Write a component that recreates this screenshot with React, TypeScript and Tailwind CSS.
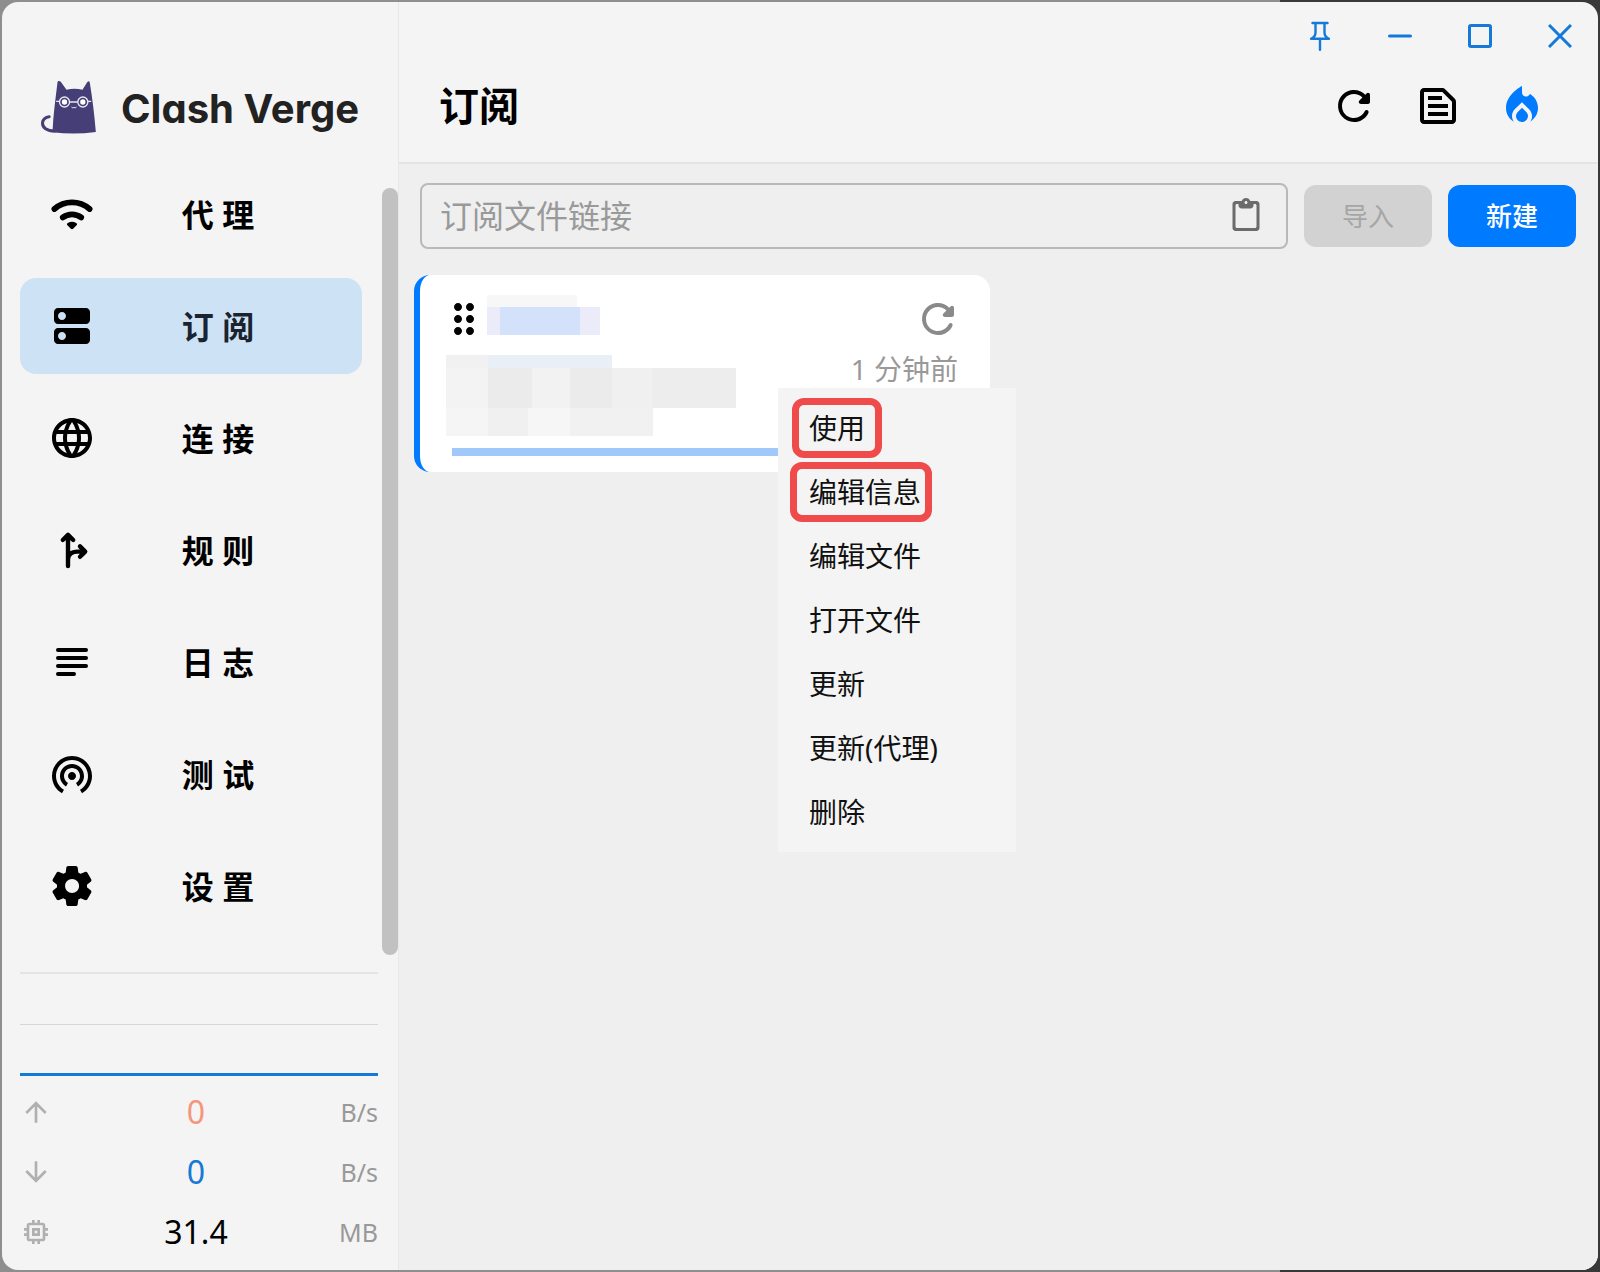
import React, { ReactNode } from "react";
import {
  MdArrowDownward,
  MdArrowUpward,
  MdDragIndicator,
  MdLanguage,
  MdLocalFireDepartment,
  MdMemory,
  MdOutlineTextSnippet,
  MdWifiTethering,
} from "react-icons/md";

interface IconProps {
  className?: string;
}

const WifiIcon = ({ className }: IconProps) => (
  <svg viewBox="0 0 24 24" className={className} fill="none" stroke="currentColor" strokeWidth="2.9" strokeLinecap="round">
    <path d="M3.2 9.5a13.4 13.4 0 0 1 17.6 0" />
    <path d="M7.4 13.7a7.6 7.6 0 0 1 9.2 0" />
    <path d="M9.6 17.5q-.5-.6.3-1a4.4 4.4 0 0 1 4.2 0q.8.4.3 1l-1.7 1.8c-.4.4-1 .4-1.4 0z" fill="currentColor" stroke="none" />
  </svg>
);

const DnsIcon = ({ className }: IconProps) => (
  <svg viewBox="0 0 24 24" className={className} fill="currentColor">
    <path d="M19 13H5c-1.1 0-2 .9-2 2v4c0 1.1.9 2 2 2h14c1.1 0 2-.9 2-2v-4c0-1.1-.9-2-2-2zM7 19c-1.1 0-2-.9-2-2s.9-2 2-2 2 .9 2 2-.9 2-2 2zM19 3H5c-1.1 0-2 .9-2 2v4c0 1.1.9 2 2 2h14c1.1 0 2-.9 2-2V5c0-1.1-.9-2-2-2zM7 9c-1.1 0-2-.9-2-2s.9-2 2-2 2 .9 2 2-.9 2-2 2z" />
  </svg>
);

const ForkIcon = ({ className }: IconProps) => (
  <svg viewBox="0 0 24 24" className={className} fill="none" stroke="currentColor" strokeWidth="2.2" strokeLinecap="round" strokeLinejoin="round">
    <path d="M10 20V5M7.4 7 10 4.4 12.6 7M10 16.8c0-2.8 2-4 5-4h3.4M16 10.2l2.6 2.6-2.6 2.6" />
  </svg>
);

const SubjectIcon = ({ className }: IconProps) => (
  <svg viewBox="0 0 24 24" className={className} fill="none" stroke="currentColor" strokeWidth="2" strokeLinecap="round">
    <path d="M5 6h14M5 10h14M5 14h14M5 18h8" />
  </svg>
);

const SettingsIcon = ({ className }: IconProps) => (
  <svg viewBox="0 0 24 24" className={className} fill="currentColor">
    <path d="M19.5 12c0-.23-.01-.45-.03-.68l1.86-1.41c.4-.3.51-.86.26-1.3l-1.87-3.23c-.25-.44-.79-.62-1.25-.42l-2.15.91c-.37-.26-.76-.49-1.17-.68l-.29-2.31c-.06-.5-.49-.88-.99-.88h-3.73c-.51 0-.94.38-1 .88l-.29 2.31c-.41.19-.8.42-1.17.68l-2.15-.91c-.46-.2-1-.02-1.25.42L2.41 8.62c-.25.44-.14.99.26 1.3l1.86 1.41c-.02.22-.03.44-.03.67s.01.45.03.68l-1.86 1.41c-.4.3-.51.86-.26 1.3l1.87 3.23c.25.44.79.62 1.25.42l2.15-.91c.37.26.76.49 1.17.68l.29 2.31c.06.5.49.88.99.88h3.73c.5 0 .93-.38.99-.88l.29-2.31c.41-.19.8-.42 1.17-.68l2.15.91c.46.2 1 .02 1.25-.42l1.87-3.23c.25-.44.14-.99-.26-1.3l-1.86-1.41c.03-.23.04-.45.04-.68zm-7.46 3.5c-1.93 0-3.5-1.57-3.5-3.5s1.57-3.5 3.5-3.5 3.5 1.57 3.5 3.5-1.57 3.5-3.5 3.5z" />
  </svg>
);

const RefreshIcon = ({ className }: IconProps) => (
  <svg viewBox="0 0 24 24" className={className} fill="currentColor">
    <path d="M17.65 6.35c-1.63-1.63-3.94-2.57-6.48-2.31-3.67.37-6.69 3.35-7.1 7.02C3.52 15.91 7.27 20 12 20c3.19 0 5.93-1.87 7.21-4.56.32-.67-.16-1.44-.9-1.44-.37 0-.72.2-.88.53-1.13 2.43-3.84 3.97-6.8 3.31-2.22-.49-4.01-2.3-4.48-4.52C5.31 9.44 8.26 6 12 6c1.66 0 3.14.69 4.22 1.78l-1.51 1.51c-.63.63-.19 1.71.7 1.71H19c.55 0 1-.45 1-1V6.41c0-.89-1.08-1.34-1.71-.71l-.64.65z" />
  </svg>
);

const PasteIcon = ({ className }: IconProps) => (
  <svg viewBox="0 0 24 24" className={className} fill="currentColor">
    <path d="M19 2h-4.18C14.4.84 13.3 0 12 0S9.6.84 9.18 2H5c-1.1 0-2 .9-2 2v16c0 1.1.9 2 2 2h14c1.1 0 2-.9 2-2V4c0-1.1-.9-2-2-2zm-7 0c.55 0 1 .45 1 1s-.45 1-1 1-1-.45-1-1 .45-1 1-1zm6 18H6c-.55 0-1-.45-1-1V5c0-.55.45-1 1-1h1v1c0 1.1.9 2 2 2h6c1.1 0 2-.9 2-2V4h1c.55 0 1 .45 1 1v14c0 .55-.45 1-1 1z" />
  </svg>
);

const PinIcon = ({ className }: IconProps) => (
  <svg viewBox="0 0 32 32" className={className} fill="none" stroke="currentColor" strokeWidth="2.4" strokeLinecap="round" strokeLinejoin="round">
    <path d="M8.5 3h15M11.5 3v9.5c0 2.5-1.5 5-4.5 6.3h18c-3-1.3-4.5-3.8-4.5-6.3V3M16 18.8v11" />
  </svg>
);

const CatLogo = ({ className }: IconProps) => (
  <svg viewBox="120 240 170 165" className={className}>
    <path d="M177 243q4 0 7 5l15 21q23-5 48 0l14-22q6-7 8 1c8 50 14 98 18 148q-64 9-130 1c2-50 9-100 15-150q1-4 3-4z" fill="#463f77" />
    <path d="M164 393c-24 0-38-10-37-25 2-12 10-17 20-18" fill="none" stroke="#463f77" strokeWidth="9" strokeLinecap="round" />
    <g fill="none" stroke="#e9e8f2" strokeWidth="4">
      <circle cx="193" cy="306" r="15" />
      <circle cx="248" cy="306" r="15" />
      <path d="M208 306h25M168 304h10M263 304h10" />
      <path d="M214 321q4 5 7 1 4 4 8-1" strokeWidth="3" />
    </g>
    <circle cx="193" cy="306" r="8" fill="#fff" />
    <circle cx="248" cy="306" r="8" fill="#fff" />
  </svg>
);

const navItems: { label: string; icon: ReactNode; active?: boolean }[] = [
  { label: "代 理", icon: <WifiIcon className="size-12" /> },
  { label: "订 阅", icon: <DnsIcon className="size-12" />, active: true },
  { label: "连 接", icon: <MdLanguage className="size-12" /> },
  { label: "规 则", icon: <ForkIcon className="size-12" /> },
  { label: "日 志", icon: <SubjectIcon className="size-12" /> },
  { label: "测 试", icon: <MdWifiTethering className="size-12" /> },
  { label: "设 置", icon: <SettingsIcon className="size-12" /> },
];

const stats = [
  { icon: <MdArrowUpward className="size-8" />, value: "0", unit: "B/s", color: "text-[#f5967c]" },
  { icon: <MdArrowDownward className="size-8" />, value: "0", unit: "B/s", color: "text-[#1479d8]" },
  { icon: <MdMemory className="size-8" />, value: "31.4", unit: "MB", color: "text-black" },
];

const menuItems = [
  { label: "使用", frame: "ml-[2px] rounded-xl border-[7px] border-[#ee4b4a] px-[10px] py-[3px]" },
  { label: "编辑信息", frame: "rounded-xl border-[7px] border-[#ee4b4a] pt-[3px] pr-1 pb-[3px] pl-3" },
  { label: "编辑文件" },
  { label: "打开文件" },
  { label: "更新" },
  { label: "更新(代理)" },
  { label: "删除" },
];

function Sidebar() {
  return (
    <aside className="flex w-[397px] flex-none flex-col border-r border-[#e8e8e8]">
      <div className="flex h-[164px] flex-none items-center pt-[46px] pl-[38px]">
        <CatLogo className="h-[55px] w-[57px]" />
        <span className="ml-6 pt-1 font-['Inter','Noto_Sans',sans-serif] text-[40px] leading-10 font-bold whitespace-nowrap text-[#222] [font-feature-settings:'cv11']">
          Clash Verge
        </span>
      </div>

      <div className="flex">
        <nav className="flex flex-1 flex-col gap-4 pr-5 pl-[18px]">
          {navItems.map((item) => (
            <a
              key={item.label}
              href="#"
              className={
                item.active
                  ? "flex h-24 items-center rounded-2xl bg-[#cde2f5] pl-7 text-[#1a2430]"
                  : "flex h-24 items-center rounded-2xl pl-7 text-black"
              }
            >
              <span className="text-black">{item.icon}</span>
              <span className="flex-1 pt-[2px] pr-[22px] text-center text-[32px] leading-10 font-bold">{item.label}</span>
            </a>
          ))}
        </nav>
        <div className="mt-[22px] h-[767px] w-4 rounded-full bg-[#c1c1c1]" />
      </div>

      <div className="mt-auto mr-5 ml-[18px] border-t-2 border-[#e4e4e4] pb-2">
        <div className="mt-[50px] h-px bg-[#d6d6d6]" />
        <div className="mt-12 h-[3px] bg-[#1479d8]" />
        <div className="mt-[6px] flex flex-col">
          {stats.map((stat, i) => (
            <div key={i} className="flex h-[60px] items-center">
              <span className="w-[66px] text-[#b0b0b0]">{stat.icon}</span>
              <span className={`flex-1 text-center text-[32px] leading-10 ${stat.color}`}>{stat.value}</span>
              <span className="w-[72px] text-right text-[25px] leading-8 text-[#999]">{stat.unit}</span>
            </div>
          ))}
        </div>
      </div>
    </aside>
  );
}

function Header() {
  return (
    <header className="h-[162px] flex-none border-b-2 border-[#e4e4e4]">
      <div className="-mr-[2px] flex h-[68px] justify-end text-[#1479d8]">
        <button aria-label="置顶" className="flex w-20 items-center justify-center">
          <PinIcon className="size-8" />
        </button>
        <button aria-label="最小化" className="flex w-20 items-center justify-center">
          <svg viewBox="0 0 24 24" className="size-6" stroke="currentColor" strokeWidth="3" strokeLinecap="round">
            <path d="M1.5 12h21" />
          </svg>
        </button>
        <button aria-label="最大化" className="flex w-20 items-center justify-center">
          <svg viewBox="0 0 24 24" className="size-6" fill="none" stroke="currentColor" strokeWidth="3">
            <rect x="1.5" y="1.5" width="21" height="21" rx="1.5" />
          </svg>
        </button>
        <button aria-label="关闭" className="flex w-20 items-center justify-center">
          <svg viewBox="0 0 24 24" className="size-6" stroke="currentColor" strokeWidth="3">
            <path d="M1 1l22 22M23 1L1 23" />
          </svg>
        </button>
      </div>
      <div className="flex h-[72px] items-center justify-between pr-[52px] pl-10">
        <h1 className="text-[40px] leading-[52px] font-bold text-black">订阅</h1>
        <div className="flex gap-9">
          <button aria-label="更新全部">
            <RefreshIcon className="size-12" />
          </button>
          <button aria-label="查看配置">
            <MdOutlineTextSnippet className="size-12" />
          </button>
          <button aria-label="重新激活" className="text-[#007aff]">
            <MdLocalFireDepartment className="size-12" />
          </button>
        </div>
      </div>
    </header>
  );
}

// Pixelated blocks that hide the subscription name and source
function Mosaic() {
  return (
    <div className="flex flex-col">
      <div className="flex h-[13px]">
        <div className="w-[42px] bg-[#f1f1f1]" />
        <div className="w-[124px] bg-[#e9eff6]" />
      </div>
      <div className="flex h-10">
        <div className="w-[42px] bg-[#f3f3f3]" />
        <div className="w-11 bg-[#ebebeb]" />
        <div className="w-[38px] bg-[#f2f2f2]" />
        <div className="w-[42px] bg-[#ebebeb]" />
        <div className="w-10 bg-[#f0f0f0]" />
        <div className="w-[84px] bg-[#ededed]" />
      </div>
      <div className="flex h-7">
        <div className="w-[42px] bg-[#f5f5f5]" />
        <div className="w-10 bg-[#f0f0f0]" />
        <div className="w-[42px] bg-[#f6f6f6]" />
        <div className="w-[83px] bg-[#f1f1f1]" />
      </div>
    </div>
  );
}

function ContextMenu() {
  return (
    <div role="menu" className="absolute top-[113px] left-[358px] z-10 w-[238px] bg-[#f4f4f4] py-2">
      {menuItems.map((item) => (
        <button
          key={item.label}
          role="menuitem"
          className="flex h-16 w-full items-center pl-3 text-left text-[28px] leading-10 text-[#111]"
        >
          <span className={item.frame ?? "px-[19px]"}>{item.label}</span>
        </button>
      ))}
    </div>
  );
}

function ProfileCard() {
  return (
    <div className="relative h-[197px] w-[576px] rounded-2xl border-l-[6px] border-[#007aff] bg-white">
      <div className="flex items-center pt-5 pr-7 pl-5">
        <MdDragIndicator className="size-12 text-black" />
        <div className="-ml-px flex h-10 flex-col self-start">
          <div className="h-3 w-[90px] bg-[#f7f7f8]" />
          <div className="flex h-7 w-[113px] bg-[#ebebfa] pl-[13px]">
            <div className="w-[80px] bg-[#d3e1fa]" />
          </div>
        </div>
        <button aria-label="更新" className="ml-auto text-[#8a8a8a]">
          <RefreshIcon className="size-12" />
        </button>
      </div>
      <div className="flex items-start justify-between pt-3 pr-8 pl-[26px]">
        <Mosaic />
        <span className="text-[28px] leading-7 text-[#999]">1 分钟前</span>
      </div>
      <div className="mt-3 mr-[26px] ml-8 h-2 bg-[#a0c8f8]" />
      <ContextMenu />
    </div>
  );
}

export default function App() {
  return (
    <div className="h-screen bg-linear-to-r from-[#8e8e8e] from-80% to-[#383838] to-80% p-[2px] font-['Noto_Sans','Noto_Sans_CJK_SC',sans-serif]">
      <div className="flex h-full overflow-hidden rounded-2xl bg-[#f4f4f4]">
        <Sidebar />
        <main className="flex min-w-0 flex-1 flex-col">
          <Header />
          <section className="flex-1 bg-[#efefef] px-[15px] pt-[19px]">
            <div className="flex items-center gap-4 pr-[7px] pl-[6px]">
              <div className="flex h-[66px] flex-1 items-center rounded-lg border-2 border-[#b9b9b9] pr-[22px] pl-[18px]">
                <input
                  type="text"
                  aria-label="订阅文件链接"
                  placeholder="订阅文件链接"
                  className="min-w-0 flex-1 bg-transparent text-[32px] leading-10 outline-none placeholder:text-[#999]"
                />
                <button aria-label="粘贴" className="text-[#6b6b6b]">
                  <PasteIcon className="size-9" />
                </button>
              </div>
              <button disabled className="h-[62px] w-32 rounded-xl bg-[#d2d2d2] text-[26px] leading-8 text-[#a6a6a6]">
                导入
              </button>
              <button className="h-[62px] w-32 rounded-xl bg-[#007aff] text-[26px] leading-8 font-medium text-white">
                新建
              </button>
            </div>
            <div className="mt-[26px]">
              <ProfileCard />
            </div>
          </section>
        </main>
      </div>
    </div>
  );
}
